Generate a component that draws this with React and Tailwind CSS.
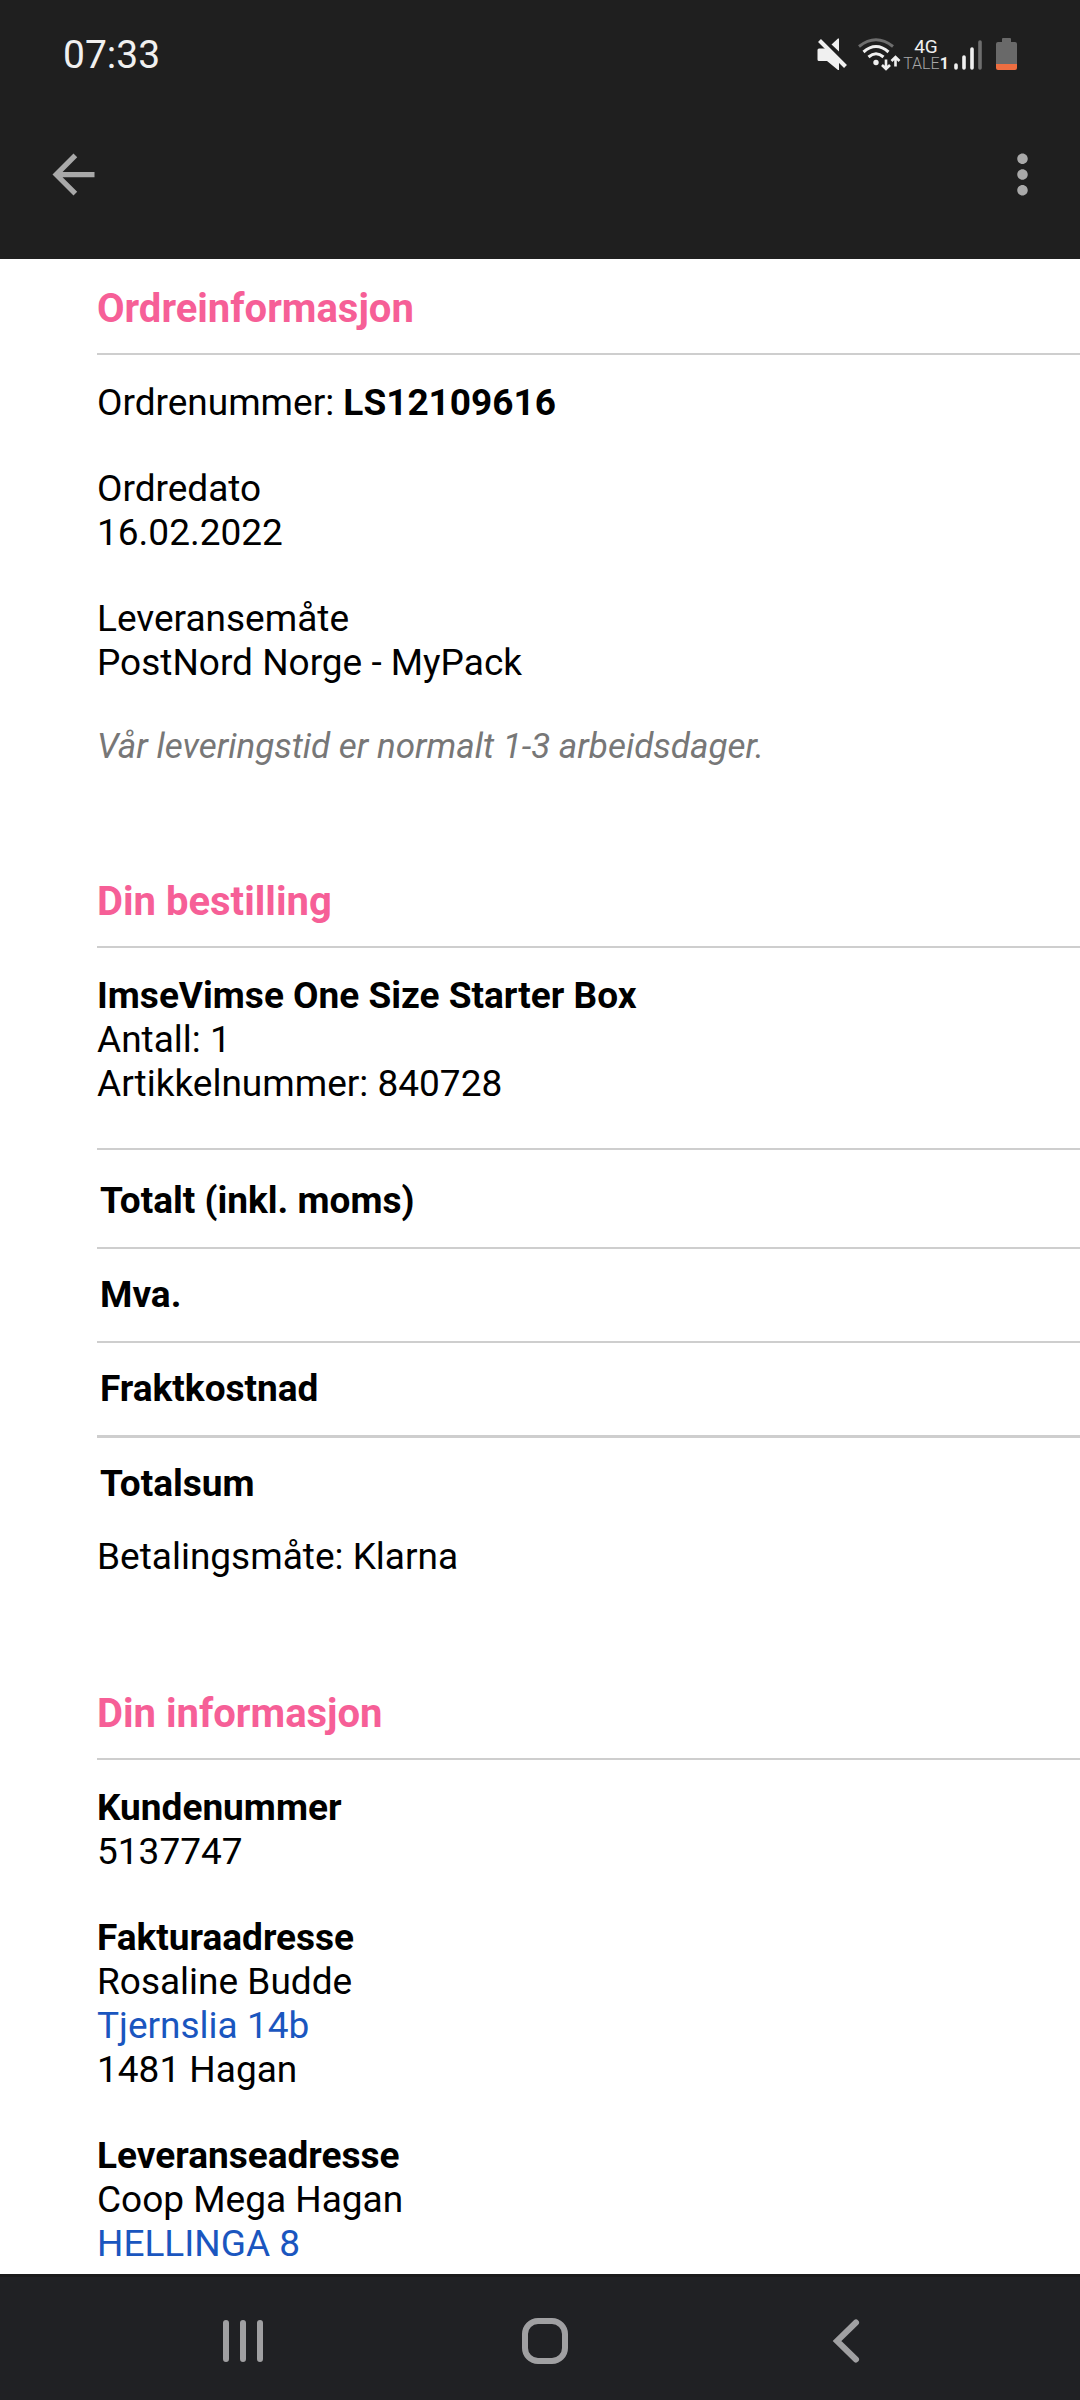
import React from "react";
import { MdArrowBack, MdMoreVert } from "react-icons/md";

const totals = [
  { label: "Totalt (inkl. moms)", border: "" },
  { label: "Mva.", border: "border-t-2 border-[#cecece]" },
  { label: "Fraktkostnad", border: "border-t-2 border-[#cecece]" },
  { label: "Totalsum", border: "border-t-3 border-[#cecece]" },
];

function StatusIcons() {
  return (
    <div className="flex items-center text-[#f0f0f0]">
      {/* muted speaker */}
      <svg width="32" height="34" viewBox="0 0 32 34" aria-hidden="true">
        <path d="M2 10.500h7L22 23.500v8.500h-1L10 23H2Q0.500 23 0.500 21.500V12Q0.500 10.500 2 10.500Z" fill="currentColor" />
        <path d="M21 0.500h1v13L14.500 6.500Z" fill="currentColor" />
        <path d="M2.500 2.500L28.500 28.500" stroke="currentColor" strokeWidth="4" />
      </svg>
      {/* wifi with traffic arrows */}
      <svg width="44" height="34" viewBox="0 0 44 34" className="ml-2" aria-hidden="true">
        <g fill="none" strokeWidth="3">
          <path d="M2 8.500Q19 -5 36 8.500" stroke="#6e6e6e" />
          <path d="M6.500 14Q19 3 31.500 14" stroke="currentColor" />
          <path d="M11.500 19Q19 12.500 26.500 19" stroke="currentColor" />
        </g>
        <circle cx="19" cy="24.500" r="2.700" fill="currentColor" />
        <path d="M29 21.500v9M25 27l4 4l4 -4M38.500 28.500v-9M34.500 23l4 -4l4 4" fill="none" stroke="currentColor" strokeWidth="2.600" />
      </svg>
      <div className="ml-[3px] flex w-11 flex-col items-center leading-[17px]">
        <span className="text-[19px]">4G</span>
        <span className="text-[16px] font-light text-[#a8a8a8]">
          TALE<b className="font-bold text-[#f0f0f0]">1</b>
        </span>
      </div>
      {/* signal strength */}
      <svg width="28" height="34" viewBox="0 0 28 34" className="ml-1.5" aria-hidden="true">
        <g strokeWidth="3.600" strokeLinecap="round" stroke="currentColor">
          <path d="M2 27v3M10 19v11M18 11v19" />
          <path d="M26 4v26" stroke="#6e6e6e" />
        </g>
      </svg>
      {/* battery */}
      <svg width="21" height="34" viewBox="0 0 21 34" className="ml-3.5" aria-hidden="true">
        <path d="M6 4V1Q6 0 7 0h7Q15 0 15 1v3h4Q21 4 21 6v21H0V6Q0 4 2 4Z" fill="#696969" />
        <path d="M0 26h21v4Q21 32 19 32H2Q0 32 0 30Z" fill="#ee6e41" />
      </svg>
    </div>
  );
}

function Section({ title, children }) {
  return (
    <section>
      <h2 className="border-b-2 border-[#cecece] pb-5 text-[40px] leading-[48px] font-bold text-[#f65f97]">{title}</h2>
      <div className="mt-[26px] space-y-[42px]">{children}</div>
    </section>
  );
}

export default function App() {
  return (
    <div className="flex min-h-screen flex-col bg-white font-['Roboto',sans-serif] text-[37px] leading-[44px] text-black">
      <header className="bg-[#1f1f1f] pb-[21px]">
        <div className="flex h-[110px] items-center justify-between pr-[63px] pl-[63px]">
          <time className="text-[39px] text-[#f0f0f0]">07:33</time>
          <StatusIcons />
        </div>
        <div className="flex h-[128px] items-center justify-between pr-[26px] pl-[42px] text-[#a9a9a9]">
          <button type="button" aria-label="Tilbake">
            <MdArrowBack size={63} />
          </button>
          <button type="button" aria-label="Flere valg">
            <MdMoreVert size={63} />
          </button>
        </div>
      </header>

      <main className="flex-1 space-y-[111px] pt-[26px] pb-2 pl-[97px]">
        <Section title="Ordreinformasjon">
          <p>
            Ordrenummer: <b>LS12109616</b>
          </p>
          <p>
            Ordredato
            <br />
            16.02.2022
          </p>
          <p>
            Leveransemåte
            <br />
            PostNord Norge - MyPack
          </p>
          <p className="text-[35px] leading-[40px] text-[#777777] italic">Vår leveringstid er normalt 1-3 arbeidsdager.</p>
        </Section>

        <Section title="Din bestilling">
          <p>
            <b>ImseVimse One Size Starter Box</b>
            <br />
            Antall: 1
            <br />
            Artikkelnummer: 840728
          </p>
          <div>
            <div className="border-t-2 border-[#cecece] py-[5px]">
              <table className="w-full border-collapse">
                <tbody>
                  {totals.map((row) => (
                    <tr key={row.label} className={row.border}>
                      <th scope="row" className="px-[3px] py-6 text-left font-bold">
                        {row.label}
                      </th>
                    </tr>
                  ))}
                </tbody>
              </table>
            </div>
            <p>Betalingsmåte: Klarna</p>
          </div>
        </Section>

        <Section title="Din informasjon">
          <p>
            <b>Kundenummer</b>
            <br />
            5137747
          </p>
          <p>
            <b>Fakturaadresse</b>
            <br />
            Rosaline Budde
            <br />
            <a href="#fakturaadresse" className="text-[#1a56bf]">Tjernslia 14b</a>
            <br />
            1481 Hagan
          </p>
          <p>
            <b>Leveranseadresse</b>
            <br />
            Coop Mega Hagan
            <br />
            <a href="#leveranseadresse" className="text-[#1a56bf]">HELLINGA 8</a>
          </p>
        </Section>
      </main>

      <nav className="flex h-[126px] items-center border-t-3 border-[#1b1b1b] bg-[#202124] pt-1 pr-[83px] pl-[92px] text-[#a0a0a2]">
        <button type="button" aria-label="Nylige apper" className="flex flex-1 justify-center">
          <svg width="48" height="48" viewBox="0 0 48 48" fill="none" stroke="currentColor" strokeWidth="6" strokeLinecap="round">
            <path d="M7 6v36M24 6v36M41 6v36" />
          </svg>
        </button>
        <button type="button" aria-label="Hjem" className="flex flex-1 justify-center">
          <svg width="48" height="48" viewBox="0 0 48 48" fill="none" stroke="currentColor" strokeWidth="6">
            <rect x="4" y="4" width="40" height="40" rx="13" />
          </svg>
        </button>
        <button type="button" aria-label="Tilbake" className="flex flex-1 justify-center">
          <svg width="48" height="48" viewBox="0 0 48 48" fill="none" stroke="currentColor" strokeWidth="6" strokeLinecap="round">
            <path d="M34 5.500L15 24l19 18.500" />
          </svg>
        </button>
      </nav>
    </div>
  );
}
